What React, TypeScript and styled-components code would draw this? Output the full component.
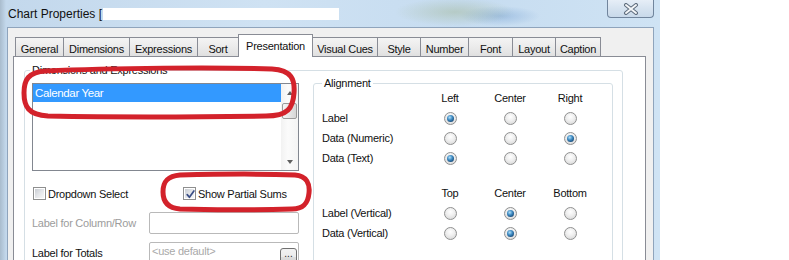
import React from "react";
import styled, { createGlobalStyle } from "styled-components";

const GlobalStyle = createGlobalStyle`
  html, body { margin: 0; padding: 0; background: #ffffff; overflow: hidden; }
  body { font-family: "Liberation Sans", Arial, sans-serif; font-size: 11px; color: #111; }
  * { box-sizing: border-box; }
`;

const Page = styled.div`
  position: relative;
  width: 789px;
  height: 260px;
  overflow: hidden;
  background: #ffffff;
`;

const Window = styled.div`
  width: 660px;
  height: 260px;
  display: flex;
  flex-direction: column;
  padding: 0 6px 0 7px;
  overflow: hidden;
  background:
    radial-gradient(ellipse 60px 14px at 455px 12px, rgba(150, 170, 120, 0.35), rgba(150, 170, 120, 0) 100%),
    radial-gradient(ellipse 40px 10px at 500px 16px, rgba(90, 140, 200, 0.35), rgba(90, 140, 200, 0) 100%),
    linear-gradient(90deg, #a9bccd 0px, #c3d8ec 6px, #cfe2f3 40%, #c6dcf0 70%, #cfe3f4 100%);
`;

const TitleBar = styled.div`
  height: 27px;
  display: flex;
  justify-content: space-between;
  align-items: flex-start;
  flex-shrink: 0;
`;

const Title = styled.div`
  margin: 7px 0 0 1px;
  font-size: 12px;
  line-height: 14px;
  color: #101010;
  display: flex;
  align-items: center;
`;

const Redaction = styled.span`
  display: inline-block;
  width: 236px;
  height: 12px;
  margin-left: 1px;
  background: #ffffff;
  filter: blur(0.4px);
`;

const CloseButton = styled.div`
  width: 47px;
  height: 18px;
  border: 1px solid #71859d;
  border-top: none;
  border-radius: 0 0 4px 4px;
  background: linear-gradient(180deg, #e6eef7 0%, #d6e3f0 50%, #c9d9ea 100%);
  display: flex;
  align-items: center;
  justify-content: center;
`;

const Body = styled.div`
  flex: 1;
  display: flex;
  flex-direction: column;
  background: #f0f0f0;
  border: 1px solid #8fa4bc;
  border-bottom: none;
  letter-spacing: -0.25px;
`;

const TabStrip = styled.div`
  display: flex;
  align-items: flex-end;
  height: 28px;
  padding: 6px 0 0 7px;
  flex-shrink: 0;
`;

const Tab = styled.div<{ $w: number; $active?: boolean }>`
  position: relative;
  width: ${(p) => p.$w}px;
  height: ${(p) => (p.$active ? 23 : 19)}px;
  margin-left: -1px;
  margin-bottom: ${(p) => (p.$active ? -1 : 0)}px;
  z-index: ${(p) => (p.$active ? 2 : 1)};
  border: 1px solid #898c95;
  border-bottom: none;
  background: ${(p) => (p.$active ? "#ffffff" : "linear-gradient(180deg, #f4f4f4 0%, #ebebeb 50%, #e0e0e0 100%)")};
  display: flex;
  justify-content: center;
  align-items: center;
  padding-top: ${(p) => (p.$active ? 0 : 3)}px;
  white-space: nowrap;
  &:first-child { margin-left: 0; }
`;

const Panel = styled.div`
  flex: 1;
  margin: 0 7px 0 5px;
  background: #ffffff;
  border: 1px solid #898c95;
  border-bottom: none;
  padding: 7px 22px 0 10px;
`;

const GroupBox = styled.fieldset`
  margin: 0;
  min-width: 0;
  height: 240px;
  border: 1px solid #d5dfe5;
  border-radius: 3px;
  padding: 6px 9px 0 7px;
`;

const Legend = styled.legend<{ $shift?: number }>`
  padding: 0 2px;
  margin-left: ${(p) => p.$shift ?? 0}px;
  line-height: 13px;
`;

const GroupContent = styled.div`
  display: flex;
  align-items: flex-start;
  gap: 14px;
`;

const LeftColumn = styled.div`
  width: 267px;
  display: flex;
  flex-direction: column;
`;

const ListBox = styled.div`
  height: 88px;
  border: 1px solid #828790;
  background: #ffffff;
  display: flex;
`;

const ListItems = styled.div`
  flex: 1;
  display: flex;
  flex-direction: column;
`;

const ListItem = styled.div<{ $selected?: boolean }>`
  height: 18px;
  padding-left: 2px;
  display: flex;
  align-items: center;
  font-size: 11.5px;
  letter-spacing: -0.35px;
  background: ${(p) => (p.$selected ? "#3399ff" : "transparent")};
  color: ${(p) => (p.$selected ? "#ffffff" : "#000")};
`;

const ScrollBar = styled.div`
  width: 17px;
  display: flex;
  flex-direction: column;
  background: linear-gradient(90deg, #f2f2f2, #fbfbfb 40%, #f4f4f4);
`;

const ScrollButton = styled.div`
  height: 17px;
  display: flex;
  align-items: center;
  justify-content: center;
`;

const Arrow = styled.span<{ $dir: "up" | "down" }>`
  width: 0;
  height: 0;
  border-left: 3.5px solid transparent;
  border-right: 3.5px solid transparent;
  ${(p) => (p.$dir === "up" ? "border-bottom: 4px solid #606060;" : "border-top: 4px solid #606060;")}
`;

const Thumb = styled.div`
  height: 16px;
  margin: 2px 1px 0 1px;
  border: 1px solid #9a9a9a;
  border-radius: 2px;
  background: linear-gradient(90deg, #f5f5f5 0%, #e6e6e6 50%, #d6d6d6 100%);
`;

const ScrollTrack = styled.div`
  flex: 1;
`;

const CheckRow = styled.div`
  margin-top: 16px;
  padding-left: 1px;
  display: flex;
  align-items: center;
  height: 13px;
`;

const CheckItem = styled.label<{ $w?: number }>`
  display: flex;
  align-items: center;
  gap: 2px;
  width: ${(p) => (p.$w ? `${p.$w}px` : "auto")};
  white-space: nowrap;
`;

const CheckBox = styled.span`
  width: 13px;
  height: 13px;
  border: 1px solid #8e8f8f;
  background: #ffffff;
  padding: 1px;
  display: flex;
  flex-shrink: 0;
  position: relative;
  &::before {
    content: "";
    flex: 1;
    background: linear-gradient(135deg, #c9cdd3 0%, #e4e6e9 50%, #f7f7f7 100%);
  }
  svg { position: absolute; left: 1px; top: 1px; }
`;

const FieldRow = styled.div<{ $mt: number }>`
  margin-top: ${(p) => p.$mt}px;
  display: flex;
  align-items: center;
`;

const FieldLabel = styled.span<{ $disabled?: boolean }>`
  width: 117px;
  white-space: nowrap;
  color: ${(p) => (p.$disabled ? "#9c9c9c" : "#111")};
`;

const TextBox = styled.div`
  width: 150px;
  height: 22px;
  border: 1px solid #b9b9b9;
  border-radius: 2px;
  background: #ffffff;
  display: flex;
  justify-content: space-between;
  align-items: flex-start;
  padding: 1px 1px 0 2px;
`;

const Placeholder = styled.span`
  color: #a9a9a9;
  line-height: 14px;
`;

const DotsButton = styled.div`
  width: 17px;
  height: 18px;
  margin-top: 4px;
  border: 1px solid #707070;
  border-radius: 3px;
  background: linear-gradient(180deg, #f2f2f2 0%, #ebebeb 50%, #dddddd 51%, #cfcfcf 100%);
  display: flex;
  justify-content: center;
  align-items: flex-start;
  line-height: 9px;
  font-size: 10px;
  letter-spacing: 0;
  color: #222;
`;

const AlignmentBox = styled.fieldset`
  margin: -6px 0 0 0;
  width: 300px;
  min-width: 0;
  height: 220px;
  border: 1px solid #d5dfe5;
  border-radius: 3px;
  padding: 0 0 0 8px;
`;

const AlignTable = styled.div<{ $mt: number }>`
  margin-top: ${(p) => p.$mt}px;
  display: grid;
  grid-template-columns: 98px 60px 60px 60px;
  grid-auto-rows: 20px;
  align-items: center;
`;

const ColHead = styled.span`
  justify-self: center;
  white-space: nowrap;
`;

const RowLabel = styled.span`
  white-space: nowrap;
`;

const Radio = styled.span<{ $on?: boolean }>`
  justify-self: center;
  width: 13px;
  height: 13px;
  border-radius: 50%;
  border: 1px solid #8f9090;
  background: radial-gradient(circle at 50% 35%, #ffffff 0%, #eeeeee 45%, #d2d2d2 100%);
  display: flex;
  align-items: center;
  justify-content: center;
  &::after {
    content: "";
    width: 7px;
    height: 7px;
    border-radius: 50%;
    display: ${(p) => (p.$on ? "block" : "none")};
    background: radial-gradient(circle at 40% 35%, #b4e0f7 0%, #3f8cc4 40%, #1b4f7d 75%, #123a5e 100%);
  }
`;

const Annotations = styled.svg`
  position: absolute;
  left: 0;
  top: 0;
  pointer-events: none;
`;

const tabs = [
  { label: "General", w: 49 },
  { label: "Dimensions", w: 67 },
  { label: "Expressions", w: 69 },
  { label: "Sort", w: 42 },
  { label: "Presentation", w: 75, active: true },
  { label: "Visual Cues", w: 66 },
  { label: "Style", w: 44 },
  { label: "Number", w: 49 },
  { label: "Font", w: 45 },
  { label: "Layout", w: 44 },
  { label: "Caption", w: 46 },
];

const horizontal = {
  heads: ["Left", "Center", "Right"],
  rows: [
    { label: "Label", on: 0 },
    { label: "Data (Numeric)", on: 2 },
    { label: "Data (Text)", on: 0 },
  ],
};

const vertical = {
  heads: ["Top", "Center", "Bottom"],
  rows: [
    { label: "Label (Vertical)", on: 1 },
    { label: "Data (Vertical)", on: 1 },
  ],
};

function AlignmentSection({ data, mt }: { data: typeof horizontal; mt: number }) {
  return (
    <AlignTable $mt={mt}>
      <span />
      {data.heads.map((h) => (
        <ColHead key={h}>{h}</ColHead>
      ))}
      {data.rows.map((r) => (
        <React.Fragment key={r.label}>
          <RowLabel>{r.label}</RowLabel>
          {[0, 1, 2].map((i) => (
            <Radio key={i} $on={r.on === i} />
          ))}
        </React.Fragment>
      ))}
    </AlignTable>
  );
}

function CheckMark() {
  return (
    <svg width="11" height="11" viewBox="0 0 11 11">
      <path d="M2.2 5.6 L4.4 8.3 L8.9 1.9" fill="none" stroke="#3b4f86" strokeWidth="1.7" strokeLinecap="round" strokeLinejoin="round" />
    </svg>
  );
}

function CloseGlyph() {
  return (
    <svg width="16" height="12" viewBox="0 0 16 12">
      <path d="M3 2 L13 10 M13 2 L3 10" stroke="#5d6b7c" strokeWidth="4" strokeLinecap="round" />
      <path d="M3 2 L13 10 M13 2 L3 10" stroke="#f4f6f8" strokeWidth="2" strokeLinecap="round" />
    </svg>
  );
}

export default function App() {
  return (
    <Page>
      <GlobalStyle />
      <Window>
        <TitleBar>
          <Title>
            Chart Properties [<Redaction />
          </Title>
          <CloseButton>
            <CloseGlyph />
          </CloseButton>
        </TitleBar>
        <Body>
          <TabStrip>
            {tabs.map((t) => (
              <Tab key={t.label} $w={t.w} $active={t.active}>
                {t.label}
              </Tab>
            ))}
          </TabStrip>
          <Panel>
            <GroupBox>
              <Legend $shift={-2}>Dimensions and Expressions</Legend>
              <GroupContent>
                <LeftColumn>
                  <ListBox>
                    <ListItems>
                      <ListItem $selected>Calendar Year</ListItem>
                    </ListItems>
                    <ScrollBar>
                      <ScrollButton>
                        <Arrow $dir="up" />
                      </ScrollButton>
                      <Thumb />
                      <ScrollTrack />
                      <ScrollButton>
                        <Arrow $dir="down" />
                      </ScrollButton>
                    </ScrollBar>
                  </ListBox>
                  <CheckRow>
                    <CheckItem $w={150}>
                      <CheckBox />
                      Dropdown Select
                    </CheckItem>
                    <CheckItem>
                      <CheckBox>
                        <CheckMark />
                      </CheckBox>
                      Show Partial Sums
                    </CheckItem>
                  </CheckRow>
                  <FieldRow $mt={12}>
                    <FieldLabel $disabled>Label for Column/Row</FieldLabel>
                    <TextBox />
                  </FieldRow>
                  <FieldRow $mt={8}>
                    <FieldLabel>Label for Totals</FieldLabel>
                    <TextBox>
                      <Placeholder>&lt;use default&gt;</Placeholder>
                      <DotsButton>...</DotsButton>
                    </TextBox>
                  </FieldRow>
                </LeftColumn>
                <AlignmentBox>
                  <Legend $shift={0}>Alignment</Legend>
                  <AlignmentSection data={horizontal} mt={-2} />
                  <AlignmentSection data={vertical} mt={15} />
                </AlignmentBox>
              </GroupContent>
            </GroupBox>
          </Panel>
        </Body>
      </Window>
      <Annotations width="789" height="260" viewBox="0 0 789 260">
        <path
          d="M46 71 C110 68 220 67 272 69 C292 70 295 80 294 93 C293 108 288 116 266 116 C200 117 100 117 48 116 C28 115 24 106 24 93 C24 80 28 72 46 71 Z"
          fill="none"
          stroke="#d3222b"
          strokeWidth="5"
        />
        <path
          d="M180 175 C220 174 270 174 295 175 C307 176 310 184 309 193 C308 203 304 209 292 209 C250 210 210 210 180 209 C167 208 163 201 163 192 C163 182 167 176 180 175 Z"
          fill="none"
          stroke="#d3222b"
          strokeWidth="5"
        />
      </Annotations>
    </Page>
  );
}
